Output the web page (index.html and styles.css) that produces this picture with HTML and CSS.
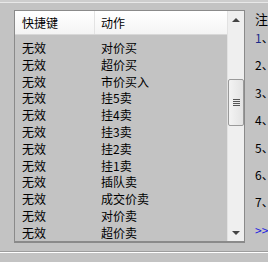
FILE: index.html
```html
<!DOCTYPE html>
<html lang="zh-CN">
<head>
    <meta charset="UTF-8">
    <title>快捷键设置</title>
    <link rel="stylesheet" href="styles.css">
</head>
<body>
    <div class="topline"></div>
    <div class="main">
        <div class="list-panel">
            <div class="list">
                <div class="list-head">
                    <div class="col-key">快捷键</div>
                    <div class="col-act">动作</div>
                </div>
                <div class="rows">
                    <div class="row"><span class="col-key">无效</span><span class="col-act">对价买</span></div>
                    <div class="row"><span class="col-key">无效</span><span class="col-act">超价买</span></div>
                    <div class="row"><span class="col-key">无效</span><span class="col-act">市价买入</span></div>
                    <div class="row"><span class="col-key">无效</span><span class="col-act">挂5卖</span></div>
                    <div class="row"><span class="col-key">无效</span><span class="col-act">挂4卖</span></div>
                    <div class="row"><span class="col-key">无效</span><span class="col-act">挂3卖</span></div>
                    <div class="row"><span class="col-key">无效</span><span class="col-act">挂2卖</span></div>
                    <div class="row"><span class="col-key">无效</span><span class="col-act">挂1卖</span></div>
                    <div class="row"><span class="col-key">无效</span><span class="col-act">插队卖</span></div>
                    <div class="row"><span class="col-key">无效</span><span class="col-act">成交价卖</span></div>
                    <div class="row"><span class="col-key">无效</span><span class="col-act">对价卖</span></div>
                    <div class="row"><span class="col-key">无效</span><span class="col-act">超价卖</span></div>
                </div>
            </div>
            <div class="scrollbar">
                <div class="arrow up"></div>
                <div class="track">
                    <div class="thumb"><span class="grip"></span></div>
                </div>
                <div class="arrow down"></div>
            </div>
        </div>
        <div class="notes">
            <div class="note-title">注</div>
            <div class="note"><span class="num first">1</span>、</div>
            <div class="note">2、</div>
            <div class="note">3、</div>
            <div class="note">4、</div>
            <div class="note">5、</div>
            <div class="note">6、</div>
            <div class="note">7、</div>
            <div class="note more">&gt;&gt;</div>
        </div>
    </div>
    <div class="separator"></div>
</body>
</html>
```

FILE: styles.css
```css
body {
    margin: 0;
    width: 268px;
    height: 262px;
    overflow: hidden;
    background-color: #c3c3c3;
    font-family: "Noto Sans CJK SC", "DejaVu Sans", sans-serif;
    font-size: 12px;
    color: #000;
}
.topline {
    height: 2px;
    background-color: #cdcdcd;
    border-bottom: 1px solid #e8e8e8;
}
.main {
    display: flex;
    align-items: flex-start;
    height: 248px;
}
.list-panel {
    display: flex;
    flex-shrink: 0;
    margin-left: 14px;
    margin-top: 7px;
    width: 229px;
    height: 230px;
    border: 1px solid #8a8a8a;
    border-bottom-width: 2px;
}
.list {
    flex: 1;
    overflow: hidden;
}
.list-head {
    display: flex;
    height: 23px;
    line-height: 23px;
    background: linear-gradient(#ffffff, #f4f4f4);
    border-bottom: 1px solid #d8d8d8;
}
.list-head .col-key {
    width: 72px;
    padding-left: 7px;
    border-right: 1px solid #e3e3e3;
}
.list-head .col-act {
    padding-left: 6px;
}
.rows {
    padding-top: 5px;
}
.row {
    display: flex;
    height: 16.8px;
    line-height: 16.8px;
}
.row .col-key {
    width: 73px;
    padding-left: 7px;
}
.row .col-act {
    padding-left: 6px;
}
.scrollbar {
    display: flex;
    flex-direction: column;
    width: 16px;
    background-color: #efefef;
    border-left: 1px solid #e2e2e2;
}
.arrow {
    height: 17px;
    display: flex;
    justify-content: center;
    align-items: center;
}
.arrow::after {
    content: "";
    border-left: 4px solid transparent;
    border-right: 4px solid transparent;
}
.arrow.up::after {
    border-bottom: 4px solid #444;
}
.arrow.down::after {
    border-top: 4px solid #444;
}
.track {
    flex: 1;
    padding-top: 51px;
}
.thumb {
    height: 45px;
    border: 1px solid #9a9a9a;
    border-radius: 2px;
    background: linear-gradient(to right, #f3f3f3, #e3e3e3);
    display: flex;
    justify-content: center;
    align-items: center;
}
.grip {
    width: 7px;
    height: 7px;
    background: repeating-linear-gradient(#555 0 1px, transparent 1px 2px);
}
.notes {
    flex-shrink: 0;
    margin-left: 10px;
    padding-top: 7px;
    white-space: nowrap;
}
.note-title {
    height: 20px;
    line-height: 17px;
    font-size: 13px;
}
.note {
    height: 27.4px;
    line-height: 16px;
}
.num.first {
    color: #1a2a8a;
}
.note.more {
    color: #2020e0;
}
.separator {
    height: 1px;
    background-color: #9d9d9d;
    border-bottom: 1px solid #ffffff;
}
```
